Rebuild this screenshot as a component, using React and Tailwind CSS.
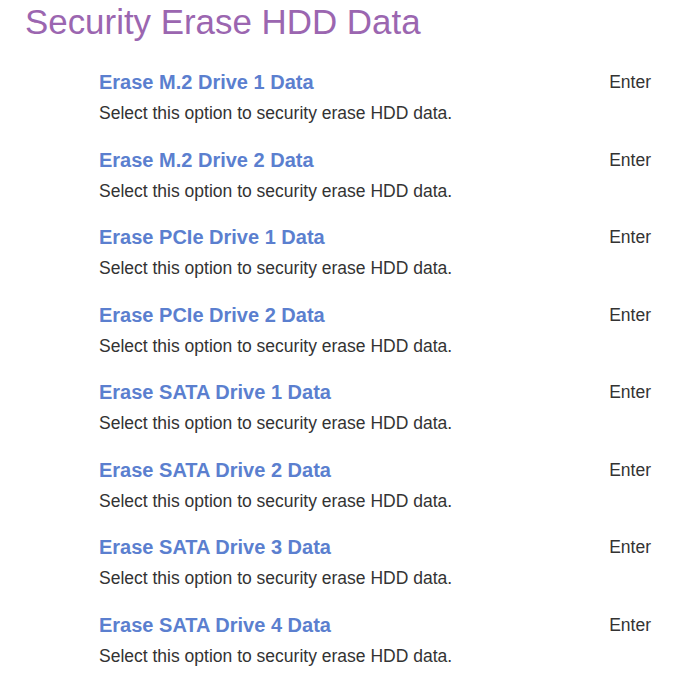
const drives = [
  "Erase M.2 Drive 1 Data",
  "Erase M.2 Drive 2 Data",
  "Erase PCIe Drive 1 Data",
  "Erase PCIe Drive 2 Data",
  "Erase SATA Drive 1 Data",
  "Erase SATA Drive 2 Data",
  "Erase SATA Drive 3 Data",
  "Erase SATA Drive 4 Data",
];

function DriveRow({ title }) {
  return (
    <div className="flex h-[77.5px] items-start justify-between">
      <div>
        <div className="text-[20px] font-bold leading-[28px] text-[#5b7fcf]">
          {title}
        </div>
        <div className="mt-[6px] text-[17.5px] leading-[22px] text-[#333333]">
          Select this option to security erase HDD data.
        </div>
      </div>
      <div className="text-[17.5px] leading-[28px] text-[#333333]">Enter</div>
    </div>
  );
}

export default function App() {
  return (
    <div
      className="h-[676px] w-[673px] overflow-hidden bg-white"
      style={{ fontFamily: '"Liberation Sans", Arial, sans-serif' }}
    >
      <h1 className="pl-[25px] text-[34.9px] leading-[44px] text-[#9b66b0]">
        Security Erase HDD Data
      </h1>
      <div className="mt-[24px] pl-[99px] pr-[22px]">
        {drives.map((d) => (
          <DriveRow key={d} title={d} />
        ))}
      </div>
    </div>
  );
}
